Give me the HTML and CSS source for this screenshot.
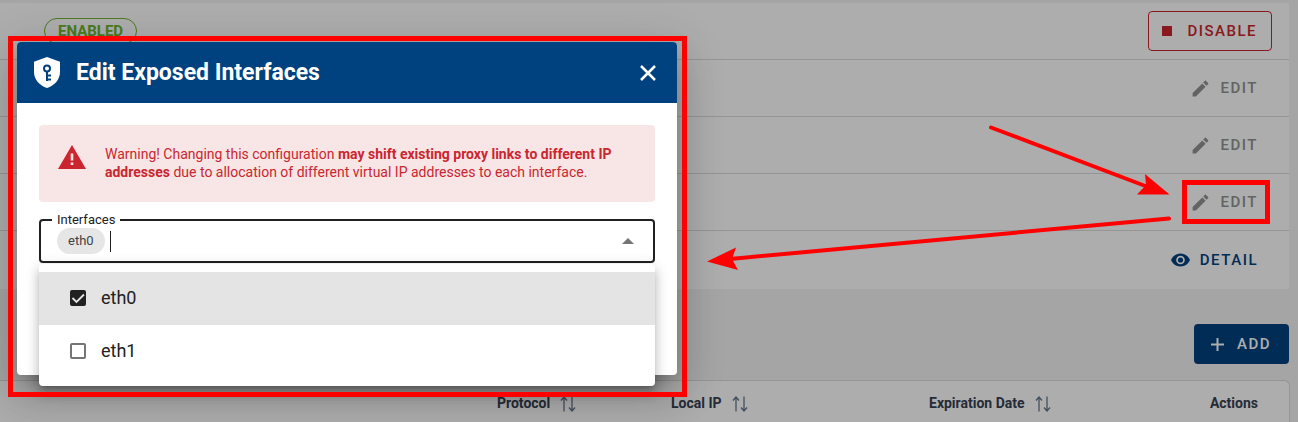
FILE: index.html
```html
<!DOCTYPE html>
<html lang="en">
<head>
<meta charset="utf-8">
<title>Edit Exposed Interfaces</title>
<link rel="stylesheet" href="styles.css">
</head>
<body>
<svg class="sprite" aria-hidden="true">
  <symbol id="pencil" viewBox="0 0 24 24"><path d="M20.7 7.04c.4-.39.4-1.04 0-1.41l-2.34-2.34c-.37-.39-1.02-.39-1.41 0l-1.84 1.83 3.75 3.75M3 17.25V21h3.75L17.81 9.93l-3.75-3.75L3 17.25z"/></symbol>
  <symbol id="sort" viewBox="0 0 16 16"><path d="M4 15.500V1M1 4.500L4 1L7 4.500M12 .5V15M9 11.500L12 15L15 11.500" fill="none" stroke="currentColor" stroke-width="1.300"/></symbol>
</svg>
<main class="page">
  <section class="panel">
    <div class="row">
      <span class="status">ENABLED</span>
      <button class="btn btn-outline" type="button"><svg class="icon-stop" viewBox="0 0 10 10"><path d="M0 0h10v10H0z"/></svg>DISABLE</button>
    </div>
    <div class="row"><button class="btn btn-edit" type="button"><svg class="icon-edit"><use href="#pencil"/></svg>EDIT</button></div>
    <div class="row"><button class="btn btn-edit" type="button"><svg class="icon-edit"><use href="#pencil"/></svg>EDIT</button></div>
    <div class="row"><button class="btn btn-edit" type="button"><svg class="icon-edit"><use href="#pencil"/></svg>EDIT</button></div>
    <div class="row"><button class="btn btn-detail" type="button"><svg class="icon-eye" viewBox="1 4 22 16"><path d="M12 9a3 3 0 0 0-3 3 3 3 0 0 0 3 3 3 3 0 0 0 3-3 3 3 0 0 0-3-3m0 8a5 5 0 0 1-5-5 5 5 0 0 1 5-5 5 5 0 0 1 5 5 5 5 0 0 1-5 5m0-12.500C7 4.500 2.730 7.610 1 12c1.730 4.390 6 7.500 11 7.500s9.270-3.110 11-7.500c-1.730-4.390-6-7.500-11-7.500z"/></svg>DETAIL</button></div>
  </section>
  <div class="actions">
    <button class="btn btn-add" type="button"><svg class="icon-plus" viewBox="0 0 13 13"><path d="M6.500 0v13M0 6.500h13" stroke="currentColor" stroke-width="2"/></svg>ADD</button>
  </div>
  <div class="table-card">
    <table class="table">
      <colgroup><col class="col-lead"><col class="col-protocol"><col class="col-ip"><col class="col-date"><col></colgroup>
      <thead>
        <tr>
          <td></td>
          <th scope="col">Protocol<svg class="icon-sort"><use href="#sort"/></svg></th>
          <th scope="col">Local IP<svg class="icon-sort"><use href="#sort"/></svg></th>
          <th scope="col">Expiration Date<svg class="icon-sort"><use href="#sort"/></svg></th>
          <th scope="col" class="cell-end">Actions</th>
        </tr>
      </thead>
    </table>
  </div>
  <div class="scrim"></div>
</main>

<div class="dialog" role="dialog" aria-labelledby="dialog-title">
  <header class="dialog-head">
    <svg class="icon-shield" viewBox="0 0 26 31"><path fill="#fff" d="M13 0L26 4.800V15c0 7.500-5.500 13.500-13 16C5.500 28.500 0 22.500 0 15V4.800z"/><path fill="none" stroke="#00427f" stroke-width="2" d="M13 14.500V24M13 18.500h4M13 22.500h4"/><circle cx="13" cy="11.500" r="3" fill="none" stroke="#00427f" stroke-width="2"/></svg>
    <h1 class="dialog-title" id="dialog-title">Edit Exposed Interfaces</h1>
    <button class="close" type="button" aria-label="Close"><svg class="icon-close" viewBox="0 0 16 16"><path d="M1 1l14 14M15 1L1 15" stroke="currentColor" stroke-width="2.500"/></svg></button>
  </header>
  <div class="dialog-body">
    <div class="alert" role="alert">
      <svg class="icon-warn" viewBox="0 0 28 24"><path fill="#cb252f" d="M14 0l14 24H0z"/><path fill="#f8e6e6" d="M12.700 8.500h2.600v7h-2.600zM12.700 17.500h2.600V20h-2.600z"/></svg>
      <p class="alert-text">Warning! Changing this configuration <strong>may shift existing proxy links to different IP addresses</strong> due to allocation of different virtual IP addresses to each interface.</p>
    </div>
    <div class="select">
      <fieldset class="field">
        <legend class="legend"><label for="interfaces">Interfaces</label></legend>
        <div class="field-line">
          <span class="chip">eth0</span>
          <span class="cursor"></span>
          <input class="field-input" id="interfaces" type="text">
          <svg class="icon-caret" viewBox="0 0 12 6"><path fill="#757575" d="M6 0l6 6H0z"/></svg>
        </div>
      </fieldset>
      <div class="menu">
        <label class="option option-active"><span class="tick"><input class="box" type="checkbox" checked><svg class="icon-check" viewBox="0 0 16 16"><path d="M2.500 8l4 4L14 4.500" fill="none" stroke="#e4e4e4" stroke-width="1.800"/></svg></span>eth0</label>
        <label class="option"><span class="tick"><input class="box" type="checkbox"></span>eth1</label>
      </div>
    </div>
  </div>
</div>

<svg class="notes" viewBox="0 0 1298 422" aria-hidden="true">
  <g fill="none" stroke="#f00" stroke-width="5">
    <path d="M10.500 38.500h674v356h-674z"/>
    <path d="M1184.500 182.500h83v39h-83z"/>
  </g>
  <g fill="none" stroke="#f00" stroke-width="4" stroke-linecap="round">
    <path d="M991 127.500L1148 187"/>
    <path d="M1169 218.500L730 259"/>
  </g>
  <g fill="#f00">
    <path d="M1169.500 194.500L1145 174l1 11-9 9.500z"/>
    <path d="M707 261.500l29-14-4 11.500 6 11z"/>
  </g>
</svg>
</body>
</html>
```
FILE: styles.css
```css
* { box-sizing: border-box; }
body {
  margin: 0;
  font-family: Roboto, "Liberation Sans", sans-serif;
  color: #212121;
}
button, input { font: inherit; }
svg { flex: none; fill: currentColor; }
.sprite { position: absolute; width: 0; height: 0; }

.page {
  position: relative;
  min-height: 100vh;
  padding: 3px 9px 0 0;
  background: #f3f3f3;
}
.scrim {
  position: absolute;
  inset: 0;
  background: rgba(0, 0, 0, 0.32);
}
.panel { background: #fff; }
.row {
  display: flex;
  align-items: center;
  min-height: 57px;
  padding: 0 17px 0 44px;
  border-bottom: 1px solid #dcdcdc;
}
.row:last-child { min-height: 58px; border-bottom: 0; }
.status {
  padding: 0 13px;
  border: 1px solid #6db52b;
  border-radius: 13px;
  color: #6db52b;
  font-size: 15px;
  font-weight: 700;
  line-height: 24px;
}
.btn {
  display: flex;
  align-items: center;
  height: 40px;
  margin-left: auto;
  padding: 0 13px;
  border: 1px solid transparent;
  border-radius: 4px;
  background: none;
  font-size: 15px;
  font-weight: 500;
  letter-spacing: 0.1em;
}
.btn-outline { gap: 15px; padding-right: 14px; border-color: #cb252f; color: #cb252f; }
.btn-edit { gap: 10px; color: #929292; }
.btn-detail { gap: 10px; color: #00427f; }
.btn-add { gap: 13px; padding: 0 17px 0 16px; background: #00427f; color: #fff; }
.icon-stop { width: 10px; height: 10px; }
.icon-edit { width: 21px; height: 21px; }
.icon-eye { width: 19px; height: 14px; }
.icon-plus { width: 13px; height: 13px; }
.actions { display: flex; padding: 35px 0 16px; }

.table-card {
  margin-right: -1px;
  border: 1px solid #dcdcdc;
  border-width: 1px 1px 0 0;
  border-radius: 0 6px 0 0;
  background: #fff;
}
.table { width: 100%; table-layout: fixed; border-collapse: collapse; }
.table th {
  height: 41px;
  padding: 4px 0 0 16px;
  color: #374151;
  font-size: 14px;
  font-weight: 700;
  text-align: left;
  white-space: nowrap;
}
.table .cell-end { padding-top: 2px; padding-right: 31px; text-align: right; }
.col-lead { width: 481px; }
.col-protocol { width: 174px; }
.col-ip { width: 258px; }
.col-date { width: 200px; }
.icon-sort { width: 16px; height: 16px; margin-left: 10px; vertical-align: -4px; color: #64748b; }

.dialog {
  position: absolute;
  top: 42px;
  left: 17px;
  width: 660px;
  border-radius: 4px;
  background: #fff;
  box-shadow: 0 11px 15px -7px rgba(0, 0, 0, 0.2), 0 24px 38px 3px rgba(0, 0, 0, 0.14), 0 9px 46px 8px rgba(0, 0, 0, 0.12);
}
.dialog-head {
  display: flex;
  align-items: center;
  height: 61px;
  padding: 0 21px 0 17px;
  border-radius: 4px 4px 0 0;
  background: #00427f;
  color: #fff;
}
.icon-shield { width: 26px; height: 31px; }
.dialog-title { margin: 0 0 0 16px; font-size: 23px; font-weight: 700; line-height: 28px; }
.close { display: flex; margin-left: auto; padding: 0; border: 0; background: none; color: #fff; }
.icon-close { width: 16px; height: 16px; }
.dialog-body { padding: 22px 22px 112px; }
.alert {
  display: flex;
  gap: 19px;
  min-height: 77px;
  padding: 20px 28px 20px 19px;
  border-radius: 4px;
  background: #f8e6e6;
  color: #cb252f;
}
.icon-warn { width: 28px; height: 24px; }
.alert-text { margin: 0; font-size: 14px; line-height: 18px; }
.select { position: relative; margin-top: 10px; }
.field {
  margin: 0;
  padding: 0 19px 7px 16px;
  border: 2px solid #212121;
  border-radius: 4px;
}
.legend { margin-left: -5px; padding: 0 5px; font-size: 13px; line-height: 16px; }
.field-line { display: flex; align-items: center; }
.chip {
  padding: 0 11px;
  border-radius: 13px;
  background: #e6e6e6;
  color: #424242;
  font-size: 13px;
  line-height: 26px;
}
.cursor { width: 1px; height: 21px; margin-left: 5px; background: #212121; }
.field-input {
  flex: 1;
  min-width: 0;
  height: 24px;
  padding: 0;
  border: 0;
  outline: 0;
  background: none;
}
.icon-caret { width: 12px; height: 6px; }
.menu {
  position: absolute;
  top: 100%;
  left: 0;
  right: 0;
  margin-top: 1px;
  padding: 8px 0;
  border-radius: 4px;
  background: #fff;
  box-shadow: 0 5px 5px -3px rgba(0, 0, 0, 0.2), 0 8px 10px 1px rgba(0, 0, 0, 0.14), 0 3px 14px 2px rgba(0, 0, 0, 0.12);
}
.option {
  display: flex;
  align-items: center;
  gap: 15px;
  height: 53px;
  padding: 0 31px 2px;
  font-size: 18px;
}
.option-active { background: #e4e4e4; }
.tick { display: grid; width: 16px; height: 16px; }
.box {
  grid-area: 1 / 1;
  width: 16px;
  height: 16px;
  margin: 0;
  border: 2px solid #757575;
  border-radius: 2px;
  appearance: none;
}
.box:checked { border-color: #212121; background: #212121; }
.icon-check { grid-area: 1 / 1; width: 16px; height: 16px; pointer-events: none; }

.notes {
  position: absolute;
  top: 0;
  left: 0;
  width: 1298px;
  height: 422px;
  pointer-events: none;
}
```
